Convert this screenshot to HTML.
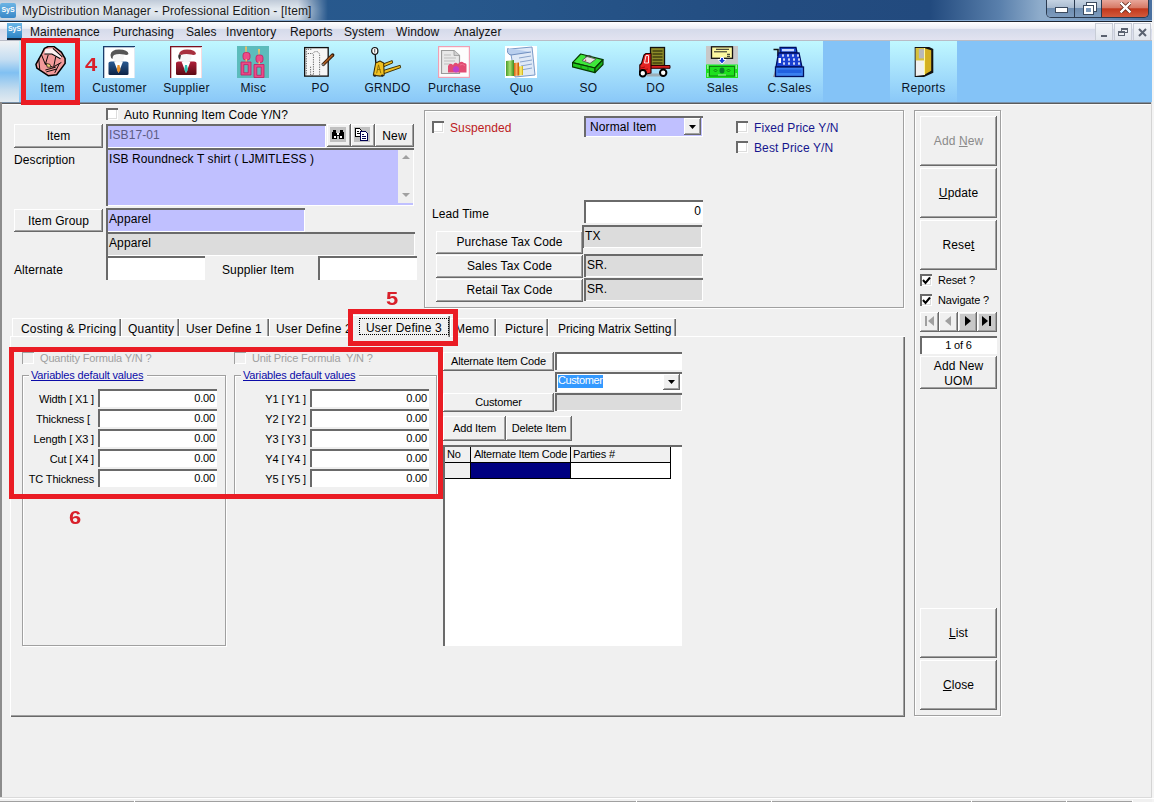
<!DOCTYPE html>
<html><head><meta charset="utf-8">
<style>
*{box-sizing:border-box;margin:0;padding:0}
html,body{width:1154px;height:802px;overflow:hidden;background:#f0f0f0;font-family:"Liberation Sans",sans-serif;font-size:12px;color:#000}
.a{position:absolute}
.t{position:absolute;white-space:nowrap;line-height:14px;font-size:12px;letter-spacing:0.1px}
.btn{position:absolute;padding-top:1px;letter-spacing:0.1px;background:#f0f0f0;box-shadow:inset -1px -1px #696969,inset 1px 1px #fff,inset -2px -2px #a0a0a0,inset 2px 2px #f0f0f0;text-align:center;white-space:nowrap;font-size:12px}
.sunk{position:absolute;box-shadow:inset 2px 2px #6a6a6a,inset -1px -1px #fff;white-space:nowrap;overflow:hidden}
.lav{background:#c0c0ff}
.gry{background:#dcdcdc}
.wht{background:#fff}
.chk{position:absolute;width:12px;height:12px;background:#fff;box-shadow:inset 2px 2px #6a6a6a,inset -1px -1px #fff,inset -2px -2px #dcdcdc}
.etch{position:absolute;border:1px solid #a0a0a0;box-shadow:inset 1px 1px #fff,1px 1px #fff}
.red{position:absolute;border:5px solid #ea1c24}
.rnum{position:absolute;color:#d8202a;font-weight:bold;font-size:18px;line-height:18px;transform:scaleX(1.22);transform-origin:0 0}
.tb{position:absolute;top:41px;height:61px;width:67px;background:linear-gradient(#c0f8ff,#a8e2fc 45%,#8ac8f8)}
.tbl{position:absolute;top:40px;left:0;width:67px;text-align:center;color:#0a1428;font-size:12px;line-height:14px;letter-spacing:0.3px}
.ic{position:absolute;top:5px;left:17px;width:32px;height:32px}
u{text-decoration:underline}
.s11{font-size:11px;letter-spacing:-0.15px}
.r{text-align:right}
.tab{background:#f0f0f0;box-shadow:inset 1px 1px #fff,inset -1px 0 #696969,inset -2px 0 #a0a0a0}
</style></head><body>

<!-- TITLE BAR -->
<div class="a" style="left:0;top:0;width:1154px;height:21px;background:linear-gradient(90deg,#2a5a90 0px,#27588c 450px,#234c80 780px,#224a7e 930px,#5a80ac 1000px,#8eaccb 1040px,#8eaccb 1050px,#4a70a0 1150px)"></div>
<div class="a" style="left:0;top:0;width:340px;height:20px;background:linear-gradient(#bfcad8,#e3e9f0 45%,#dde4ec 70%,#c9d3df);-webkit-mask-image:linear-gradient(90deg,#000 0,#000 298px,transparent 328px)"></div>
<div class="a" style="left:0;top:3px;width:16px;height:15px;background:linear-gradient(#6cb4e4,#3a88c8);border-radius:2px;color:#fff;font-size:7px;line-height:14px;text-align:center;font-weight:bold">SyS</div>
<div class="t" style="left:22px;top:4px;color:#1a1a1a;letter-spacing:0.1px">MyDistribution Manager - Professional Edition - [Item]</div>
<!-- window controls -->
<div class="a" style="left:1046px;top:0;width:103px;height:18px;border:1px solid #2a3a4f;border-top:none;border-radius:0 0 5px 5px;overflow:hidden">
  <div class="a" style="left:0;top:0;width:28px;height:17px;background:linear-gradient(#c5d3e3 0%,#a9bbd0 45%,#6e8db1 50%,#7d9bbd 100%);border-right:1px solid #2a3a4f"></div>
  <div class="a" style="left:28px;top:0;width:27px;height:17px;background:linear-gradient(#c5d3e3 0%,#a9bbd0 45%,#6e8db1 50%,#7d9bbd 100%);border-right:1px solid #2a3a4f"></div>
  <div class="a" style="left:55px;top:0;width:47px;height:17px;background:linear-gradient(#e8a79a 0%,#d77a66 45%,#c2381c 52%,#d35a3c 100%)"></div>
  <div class="a" style="left:9px;top:8px;width:11px;height:4px;background:#fff;box-shadow:0 0 0 1px #3b4a5e"></div>
  <div class="a" style="left:40px;top:3px;width:9px;height:8px;border:2px solid #fff;box-shadow:0 0 0 1px #3b4a5e"></div>
  <div class="a" style="left:37px;top:6px;width:9px;height:8px;border:2px solid #fff;background:#7d9bbd;box-shadow:0 0 0 1px #3b4a5e"></div>
  <svg class="a" style="left:73px;top:2px" width="11" height="11" viewBox="0 0 12 12"><path d="M1.5 1.5 L10.5 10.5 M10.5 1.5 L1.5 10.5" stroke="#5a2010" stroke-width="4.2" stroke-linecap="square"/><path d="M1.5 1.5 L10.5 10.5 M10.5 1.5 L1.5 10.5" stroke="#fff" stroke-width="2.6" stroke-linecap="square"/></svg>
</div>
<div class="a" style="left:0;top:20px;width:1154px;height:1px;background:#86acd4"></div>
<div class="a" style="left:0;top:21px;width:1154px;height:1px;background:#1c2430"></div>

<!-- MENU BAR -->
<div class="a" style="left:0;top:22px;width:1152px;height:18px;background:linear-gradient(#ffffff 0%,#eceef6 36%,#d4daea 37%,#e2e3f0 100%)"></div>
<div class="a" style="left:7px;top:23px;width:15px;height:17px;background:linear-gradient(#6bb6e6,#2f86c6);border-bottom:2px solid #10243a;color:#fff;font-size:7px;line-height:12px;text-align:center;font-weight:bold">SyS</div>
<div class="t" style="left:30px;top:25px;color:#111">Maintenance</div>
<div class="t" style="left:113px;top:25px;color:#111">Purchasing</div>
<div class="t" style="left:186px;top:25px;color:#111">Sales</div>
<div class="t" style="left:226px;top:25px;color:#111">Inventory</div>
<div class="t" style="left:290px;top:25px;color:#111">Reports</div>
<div class="t" style="left:344px;top:25px;color:#111">System</div>
<div class="t" style="left:396px;top:25px;color:#111">Window</div>
<div class="t" style="left:454px;top:25px;color:#111">Analyzer</div>
<div class="a" style="left:1095px;top:23px;width:18px;height:18px;border:1px solid #c7ccd6;background:linear-gradient(#f3f5f9,#e1e6ee)"><div class="a" style="left:5px;top:11px;width:6px;height:2px;background:#5a6270"></div></div>
<div class="a" style="left:1114px;top:23px;width:18px;height:18px;border:1px solid #c7ccd6;background:linear-gradient(#f3f5f9,#e1e6ee)"><div class="a" style="left:6px;top:4px;width:7px;height:5px;border:1px solid #5a6270;border-top-width:2px"></div><div class="a" style="left:3px;top:7px;width:7px;height:5px;border:1px solid #5a6270;border-top-width:2px;background:#eceff4"></div></div>
<div class="a" style="left:1133px;top:23px;width:18px;height:18px;border:1px solid #c7ccd6;background:linear-gradient(#f3f5f9,#e1e6ee)"><svg class="a" style="left:4px;top:4px" width="9" height="9"><path d="M1 1 L8 8 M8 1 L1 8" stroke="#5a6270" stroke-width="2"/></svg></div>

<!-- TOOLBAR -->
<div class="a" style="left:0;top:40px;width:1152px;height:1px;background:#b9bcc6"></div>
<div class="a" style="left:0;top:41px;width:1152px;height:61px;background:#84c3f7"></div>
<div class="a" style="left:0;top:41px;width:19px;height:61px;background:linear-gradient(#f0f2f4,#c6def2 30%,#80c0f2 52%,#c4dcee 80%,#e2eaf0)"></div>
<!-- Item -->
<div class="tb" style="left:19px">
<svg class="ic" style="left:16px;top:5px" width="34" height="33" viewBox="0 0 34 33"><path d="M10 2 L14 0 L20 0 L28 6 L32 13 L32 18 L23 30 L14 31 L2 23 L1 19 L7 8 Z" fill="#f29a9a" stroke="#000" stroke-width="1.6" stroke-linejoin="round"/><path d="M11 3 L19 2 L29 10 L26 13 L18 8 L10 8 Z" fill="#fff" opacity="0.85"/><path d="M10 8 L18 8 L27 13 M19 2 L29 11" stroke="#000" stroke-width="1.1" fill="none"/><path d="M7 9 L11 19 L19 22 L28 17 M14 9 L11 19 M22 11 L20 21 M4 13 L5 24 M11 25 L22 22 M12 27 L23 24 M26 18 L21 28" stroke="#000" stroke-width="1" fill="none"/><path d="M12 18 L16 19 L17 22 L13 22 Z" fill="#f4d47a" stroke="#000" stroke-width="0.7"/></svg>
<div class="tbl">Item</div></div>
<!-- Customer -->
<div class="tb" style="left:86px">
<svg class="ic" width="32" height="32" viewBox="0 0 32 32"><rect x="0" y="0" width="32" height="32" fill="#fff"/><rect x="0" y="0" width="32" height="1.3" fill="#1a3d6c"/><rect x="0" y="0" width="1.3" height="32" fill="#1a3d6c"/><rect x="31" y="1" width="1" height="31" fill="#dfe9f3"/><defs><linearGradient id="gs1" x1="0" y1="0" x2="0" y2="1"><stop offset="0" stop-color="#2a5a92"/><stop offset="1" stop-color="#0c2244"/></linearGradient><linearGradient id="gs2" x1="0" y1="0" x2="0" y2="1"><stop offset="0" stop-color="#b0203a"/><stop offset="1" stop-color="#5a0a14"/></linearGradient></defs><path d="M5.5 28 L5.5 17 Q5.5 15.5 8 15.5 L23 15.5 Q25.5 15.5 25.5 17 L25.5 28 Q25.5 29 24 29 L7 29 Q5.5 29 5.5 28Z" fill="url(#gs1)"/><path d="M11 15.5 L15.5 27 L20 15.5Z" fill="#fff"/><path d="M14.5 19 L16.5 19 L17.5 24 L15.5 27 L13.8 24Z" fill="#e8902a"/><ellipse cx="15.5" cy="11" rx="5.5" ry="5.5" fill="#f6f6f6"/><path d="M7.5 9 Q8 3.5 16 3.5 Q25 3.5 25.5 8 Q24 9.5 21 8.5 Q15 7.5 11 9 Q9.5 10 9.5 13 Q7.5 12 7.5 9Z" fill="#555"/></svg>
<div class="tbl">Customer</div></div>
<!-- Supplier -->
<div class="tb" style="left:153px">
<svg class="ic" width="32" height="32" viewBox="0 0 32 32"><rect x="0" y="0" width="32" height="32" fill="#fff"/><rect x="0" y="0" width="32" height="1.3" fill="#7a1020"/><rect x="0" y="0" width="1.3" height="32" fill="#7a1020"/><rect x="31" y="1" width="1" height="31" fill="#f6dce0"/><path d="M6 28 L6 17 Q6 15.5 8.5 15.5 L24 15.5 Q26.5 15.5 26.5 17 L26.5 28 Q26.5 29 25 29 L7.5 29 Q6 29 6 28Z" fill="url(#gs2)"/><path d="M11.5 15.5 L16 27 L20.5 15.5Z" fill="#fff"/><path d="M15 19 L17 19 L18 24 L16 27 L14.3 24Z" fill="#30c0b0"/><ellipse cx="16" cy="11" rx="5.5" ry="5.5" fill="#f6f6f6"/><path d="M9 8 Q10 3.5 17 3.5 Q25.5 3.5 26 8 Q24 9.5 21 8.5 Q15 7.5 11 9 Z" fill="#a8303e"/><path d="M9 8 Q7 11 10 14 L11 9Z" fill="#333"/></svg>
<div class="tbl">Supplier</div></div>
<!-- Misc -->
<div class="tb" style="left:220px">
<svg class="ic" width="32" height="32" viewBox="0 0 32 32"><rect x="0" y="0" width="32" height="32" fill="#5cbcbc"/><g><path d="M8 0.5 L10 0.5 L9.5 7 L8.5 7Z" fill="#f2c060"/><rect x="6" y="6.5" width="7" height="7.5" rx="2.5" fill="#ec4a88" stroke="#c02060" stroke-width="0.8"/><path d="M8.5 13 L10 13 L10 17 L8.5 17Z" fill="#f2c060"/><path d="M4 16 L14 16 L14 29 L4 29 Z M6.8 18.6 L6.8 26.8 L11.2 26.8 L11.2 18.6 Z" fill="#ec4a88" fill-rule="evenodd" stroke="#c02060" stroke-width="0.8"/></g><g transform="translate(13 2.5)"><path d="M8 0.5 L10 0.5 L9.5 7 L8.5 7Z" fill="#f2c060"/><rect x="6" y="6.5" width="7" height="7.5" rx="2.5" fill="#ec4a88" stroke="#c02060" stroke-width="0.8"/><path d="M8.5 13 L10 13 L10 17 L8.5 17Z" fill="#f2c060"/><path d="M4 16 L14 16 L14 29 L4 29 Z M6.8 18.6 L6.8 26.8 L11.2 26.8 L11.2 18.6 Z" fill="#ec4a88" fill-rule="evenodd" stroke="#c02060" stroke-width="0.8"/></g></svg>
<div class="tbl">Misc</div></div>
<!-- PO -->
<div class="tb" style="left:287px">
<svg class="ic" width="34" height="32" viewBox="0 0 34 32"><rect x="0.7" y="0.7" width="25" height="30.3" fill="#f6f6f6" stroke="#111" stroke-width="1.4"/><path d="M2.5 2 L2.5 30 M4 2.5 L8 2.5 M4 7 L9 7 M10 8 L10 30 M9 7 Q11 4.5 14 5 Q16.6 6 16.6 9 L16.6 30 M7 21 L7 30 L10 30" fill="none" stroke="#333" stroke-width="0.8" stroke-dasharray="1.3 1.2"/><path d="M20.5 18.5 L30.5 8.5" stroke="#2a1606" stroke-width="3.6" stroke-linecap="round"/><path d="M20.5 18.5 L30.5 8.5" stroke="#a85a20" stroke-width="2"/><path d="M19.5 19.5 L21 18" stroke="#888" stroke-width="2"/></svg>
<div class="tbl">PO</div></div>
<!-- GRNDO -->
<div class="tb" style="left:354px">
<svg class="ic" width="34" height="32" viewBox="0 0 34 32"><path d="M4.5 8 L5.2 18" stroke="#111" stroke-width="1.4"/><ellipse cx="4" cy="4.3" rx="3.3" ry="3.7" fill="#fff" stroke="#111" stroke-width="1.3"/><path d="M4 2 L4 6" stroke="#111" stroke-width="0.8"/><path d="M13 18 L22.5 14.5 L23 17 L13.5 21 Z M13 25 L31 19.5 L31.5 22 L13.5 28.5 Z" fill="#f0c020" stroke="#3a2a00" stroke-width="1"/><path d="M2.5 30 L5 17 L9.5 15 L13.5 17 L14 30 L10 31 Z" fill="#f0c020" stroke="#3a2a00" stroke-width="1.1" stroke-linejoin="round"/><path d="M6 28 L8 19 L10.5 28 M7 24 L10 24" stroke="#8a6a00" stroke-width="1" fill="none"/><circle cx="4" cy="30.5" r="1.3" fill="#222"/><circle cx="12" cy="30.5" r="1.3" fill="#222"/></svg>
<div class="tbl">GRNDO</div></div>
<!-- Purchase -->
<div class="tb" style="left:421px">
<svg class="ic" width="32" height="32" viewBox="0 0 32 32"><rect x="0.6" y="0.6" width="30.8" height="30.8" fill="#fdfdfd" stroke="#f0a0b4" stroke-width="1.2"/><path d="M3.5 4.5 L16 4.5 L21.5 9.5 L21.5 27.5 L3.5 27.5 Z" fill="#e8e8e8" stroke="#9a9a9a" stroke-width="1.2"/><path d="M16 4.5 L16 9.5 L21.5 9.5" fill="#d0d0d0" stroke="#9a9a9a" stroke-width="0.8"/><path d="M6 9 L13 9 M6 12 L18 12 M6 15 L17 15 M6 18 L12 18" stroke="#bdbdbd" stroke-width="1"/><path d="M10 20 Q12 16 15 19 Q17 15 20 18 Q23 14 26 17 Q29 17 28.5 20 L28.5 26.5 L10 26.5 Z" fill="#e24c72"/><path d="M15 22 Q18 18 21 22 Q22 26 18 26.5 Q14 26 15 22Z" fill="#c040c8"/><path d="M22 19 Q25 17 27 20" stroke="#f07090" stroke-width="1" fill="none"/></svg>
<div class="tbl">Purchase</div></div>
<!-- Quo -->
<div class="tb" style="left:488px">
<svg class="ic" width="32" height="32" viewBox="0 0 32 32"><rect x="0" y="0" width="32" height="32" fill="#fff"/><path d="M5 3 L27 1 L30 29 L10 31 Z" fill="#dfe9f7" stroke="#7a9ac8" stroke-width="1"/><path d="M3 2 Q1 8 6 9 L26 6" fill="#b9cfee" stroke="#6f8fc0" stroke-width="1"/><path d="M14 12 L26 10 M15 16 L27 14 M16 20 L27 18 M16 24 L27 22" stroke="#8aa4cc" stroke-width="1"/><defs><linearGradient id="qg" x1="0" x2="1"><stop offset="0" stop-color="#4a9a2a"/><stop offset="0.5" stop-color="#a8e070"/><stop offset="1" stop-color="#3a8a20"/></linearGradient><linearGradient id="qo" x1="0" x2="1"><stop offset="0" stop-color="#d86010"/><stop offset="0.5" stop-color="#f8b060"/><stop offset="1" stop-color="#c85000"/></linearGradient><linearGradient id="qy" x1="0" x2="1"><stop offset="0" stop-color="#d8c020"/><stop offset="0.5" stop-color="#fff080"/><stop offset="1" stop-color="#c8a800"/></linearGradient></defs><path d="M1 15 L9 14 L9 30 L1 30Z" fill="url(#qg)"/><path d="M9 17 L14 16.5 L14 29.5 L9 30Z" fill="url(#qo)"/><path d="M14 20.5 L18 20 L18 29 L14 29.5Z" fill="url(#qy)"/></svg>
<div class="tbl">Quo</div></div>
<!-- SO -->
<div class="tb" style="left:555px">
<svg class="ic" width="32" height="32" viewBox="0 0 32 32"><path d="M0.5 16.6 L8.7 8 L31 13.7 L23 22 Z" fill="#3ee83a" stroke="#063a00" stroke-width="1.2" stroke-linejoin="round"/><path d="M0.5 16.6 L23 22 L23 26.6 L0.5 20.9 Z" fill="#22c820" stroke="#063a00" stroke-width="1.2" stroke-linejoin="round"/><path d="M23 22 L31 13.7 L31 18.5 L23 26.6 Z" fill="#18b018" stroke="#063a00" stroke-width="1.2" stroke-linejoin="round"/><path d="M10 14.5 L15 10.5 L24 13 L18 17.5 Z" fill="#e4e4e4" stroke="#555" stroke-width="0.9"/><path d="M13 11 L17 9.5 L20 10.5" stroke="#444" stroke-width="0.9" fill="none"/><circle cx="13.5" cy="14.3" r="0.8" fill="#d03030"/><path d="M9 18.5 L9 22.5 M16 20 L16 24.5" stroke="#0a6a0a" stroke-width="0.7"/></svg>
<div class="tbl">SO</div></div>
<!-- DO -->
<div class="tb" style="left:622px">
<svg class="ic" width="32" height="32" viewBox="0 0 32 32"><rect x="11.5" y="1.5" width="14" height="18" fill="#8c8a28" stroke="#111" stroke-width="1.3"/><path d="M13.5 5 L23.5 5 M13.5 8 L23.5 8 M13.5 11 L23.5 11 M13.5 14 L23.5 14 M13.5 17 L23.5 17" stroke="#1a1a00" stroke-width="1"/><rect x="8" y="27.5" width="14" height="3" fill="#9a9a9a" opacity="0.7"/><path d="M11.5 19.5 L31 19.5 L31 22.3 L11.5 22.3 Z" fill="#d42020" stroke="#300" stroke-width="1"/><path d="M0.8 28 L0.8 19 L2.5 17.5 L5 9 L7 7.5 L12 7.5 L12 27 L7 28 Z" fill="#e42222" stroke="#200" stroke-width="1.1" stroke-linejoin="round"/><path d="M5.5 17 L7 9.5 L9.5 9.5 L9.5 17 Z" fill="none" stroke="#fff" stroke-width="0.9"/><path d="M2 22 L6 21 M2 24 L9 23" stroke="#800" stroke-width="0.7"/><circle cx="3.8" cy="27.2" r="3.2" fill="#fff" stroke="#000" stroke-width="2"/><circle cx="24.2" cy="26.8" r="3.2" fill="#fff" stroke="#000" stroke-width="2"/></svg>
<div class="tbl">DO</div></div>
<!-- Sales -->
<div class="tb" style="left:689px">
<svg class="ic" width="32" height="32" viewBox="0 0 32 32"><rect x="0" y="0" width="32" height="18.5" fill="#c8c8c8"/><rect x="5.5" y="0.8" width="21" height="11.5" fill="#fbf7a0" stroke="#111" stroke-width="1.3"/><path d="M10 3.3 L23 3.3 M8 5.8 L21 5.8 M21 8.3 L24 8.3 M21 10.3 L24 10.3" stroke="#222" stroke-width="1"/><path d="M12 13.5 L14.5 13.5 L14.5 11.5 L17.5 11.5 L17.5 13.5 L20 13.5 L16 18 Z" fill="#1a3ad8" stroke="#fff" stroke-width="1"/><rect x="0" y="18.5" width="32" height="13.5" fill="#1ee01e"/><rect x="3.5" y="20.5" width="25" height="9.5" fill="none" stroke="#0a6a0a" stroke-width="0.8"/><path d="M1 20 L2.5 20 M1 22 L2.5 22 M29.5 20 L31 20 M29.5 22 L31 22 M1 28 L2.5 28 M1 30 L2.5 30 M29.5 28 L31 28 M29.5 30 L31 30" stroke="#fff" stroke-width="1.2"/><ellipse cx="16" cy="24.5" rx="2.5" ry="3" fill="#0a7a2a"/><path d="M8 24.5 L9.5 23 L11 24.5 L9.5 26Z M21 24.5 L22.5 23 L24 24.5 L22.5 26Z" fill="none" stroke="#0a5a0a" stroke-width="0.7"/><path d="M12 29 L20 29" stroke="#c8f8c8" stroke-width="0.8"/></svg>
<div class="tbl">Sales</div></div>
<!-- C.Sales -->
<div class="tb" style="left:756px">
<svg class="ic" width="32" height="32" viewBox="0 0 32 32"><path d="M0 31 L4 18 L4 31Z" fill="#9a9a9a"/><path d="M0.5 3.5 L5 3.5 L5 10" stroke="#111" stroke-width="1.6" fill="none"/><path d="M7 1.5 L23 1.5 L24 6.5 L7 6.5Z" fill="#2050d8" stroke="#001060" stroke-width="1.3"/><rect x="9" y="3" width="12" height="2.3" fill="#c8d8ff"/><path d="M5.5 7 L26 7 L29 21 L3 21 Z" fill="#1a40d0" stroke="#001060" stroke-width="1.3"/><path d="M9 9 L11 9 M10 9 L10 11 M14 9 L16 9 M15 9 L15 11 M19 9 L21 9 M20 9 L20 11 M24 9 L26 9 M25 9 L25 11 M10 13 L12 13 M11 13 L11 15 M15 13 L17 13 M16 13 L16 15 M20 13 L22 13 M21 13 L21 15 M25 13 L27 13 M26 13 L26 15 M10 17 L12 17 M11 17 L11 19 M15 17 L17 17 M16 17 L16 19 M20 17 L22 17 M21 17 L21 19 M25 17 L27 17 M26 17 L26 19" stroke="#fff" stroke-width="1.1"/><rect x="5.5" y="12" width="2.5" height="5" fill="#fff"/><rect x="2.5" y="21" width="28" height="9.5" fill="#3a80f0" stroke="#001060" stroke-width="1.3"/><rect x="4.5" y="23.5" width="24" height="3.5" fill="#2060e0"/></svg>
<div class="tbl">C.Sales</div></div>
<!-- Reports -->
<div class="tb" style="left:890px">
<svg class="ic" style="left:18px;top:5px" width="20" height="31" viewBox="0 0 20 31"><path d="M1 1 L15 1 L19 3 L19 26 L10 30 L1 30 Z" fill="#111"/><path d="M2 2 L10 2 L10 28 L2 29 Z" fill="#f0f0f0"/><path d="M2 2 L10 2 L10 14 L2 14 Z" fill="#d8c23a"/><path d="M5 3 L10 3 L10 12 L5 12Z" fill="#b8b8b8"/><path d="M10 2 L17 4 L17 24 L10 28 Z" fill="#d4b020"/><path d="M10 2 L11 2 L11 28 L10 28Z" fill="#fff8a0"/></svg>
<div class="tbl">Reports</div></div>

<div class="a" style="left:0;top:102px;width:1152px;height:1px;background:#7890a8"></div><div class="a" style="left:0;top:103px;width:1152px;height:1px;background:#5c5c5c"></div><div class="a" style="left:2px;top:104px;width:1149px;height:1px;background:#fbfbfb"></div>

<!-- MDI CHILD FRAME -->
<div class="a" style="left:0;top:102px;width:2px;height:696px;background:#8c8c8c"></div>
<div class="a" style="left:1151px;top:102px;width:1px;height:696px;background:#d4d4d4"></div>
<div class="a" style="left:1152px;top:0;width:2px;height:802px;background:#f4f4f4"></div>
<div class="a" style="left:0;top:797px;width:1152px;height:1px;background:#dadada"></div>
<div class="a" style="left:0;top:798px;width:1154px;height:1px;background:#fff"></div>
<div class="a" style="left:0;top:801px;width:1133px;height:1px;background:#a0a0a0"></div>

<!-- TOP LEFT -->
<div class="chk" style="left:106px;top:108px"></div>
<div class="t" style="left:124px;top:108px">Auto Running Item Code Y/N?</div>
<div class="btn" style="left:14px;top:124px;width:89px;height:24px;line-height:22px">Item</div>
<div class="sunk lav" style="left:106px;top:124px;width:220px;height:24px"><div class="t" style="left:3px;top:4px;color:#5c5c84">ISB17-01</div></div>
<div class="btn" style="left:327px;top:124px;width:24px;height:23px"><div class="a" style="left:3px;top:3px;width:16px;height:15px;background:#c0c0c0"></div>
<svg class="a" style="left:4px;top:5px" width="14" height="11" viewBox="0 0 14 11" shape-rendering="crispEdges"><path d="M2 1 H5 V4 H9 V1 H12 L13 5 V10 H8 V7 H6 V10 H1 V5 Z" fill="#000"/><rect x="3" y="7" width="2" height="2" fill="#fff"/><rect x="9" y="7" width="2" height="2" fill="#fff"/><rect x="6" y="4" width="2" height="2" fill="#fff"/></svg></div>
<div class="btn" style="left:351px;top:124px;width:24px;height:23px"><div class="a" style="left:3px;top:3px;width:16px;height:15px;background:#c0c0c0"></div>
<svg class="a" style="left:3px;top:3px" width="16" height="16" viewBox="0 0 16 16" shape-rendering="crispEdges"><path d="M1.5 1.5 H5.5 L7.5 3.5 V9.5 H1.5 Z" fill="#fff" stroke="#000" stroke-width="1.3"/><path d="M3 4.5 H5 M3 6.5 H6" stroke="#000" stroke-width="1"/><path d="M6.5 4.5 H11.5 L13.5 6.5 V13.5 H6.5 Z" fill="#fff" stroke="#000050" stroke-width="1.3"/><path d="M8 7.5 H10 M8 9.5 H12 M8 11.5 H12" stroke="#000050" stroke-width="1"/></svg></div>
<div class="btn" style="left:375px;top:124px;width:39px;height:23px;line-height:23px">New</div>

<div class="t" style="left:14px;top:153px">Description</div>
<div class="sunk lav" style="left:106px;top:148px;width:308px;height:58px"><div class="t" style="left:3px;top:4px;color:#000">ISB Roundneck T shirt ( LJMITLESS )</div>
<div class="a" style="left:292px;top:2px;width:15px;height:53px;background:#efefef"></div>
<svg class="a" style="left:296px;top:6px" width="8" height="5"><path d="M0 5 L4 1 L8 5Z" fill="#a0a0a0"/></svg>
<svg class="a" style="left:296px;top:45px" width="8" height="5"><path d="M0 0 L4 4 L8 0Z" fill="#a0a0a0"/></svg>
</div>

<div class="btn" style="left:14px;top:209px;width:89px;height:23px;line-height:22px">Item Group</div>
<div class="sunk lav" style="left:106px;top:208px;width:199px;height:24px"><div class="t" style="left:3px;top:4px">Apparel</div></div>
<div class="sunk gry" style="left:106px;top:232px;width:309px;height:24px"><div class="t" style="left:3px;top:4px">Apparel</div></div>
<div class="t" style="left:14px;top:263px">Alternate</div>
<div class="sunk wht" style="left:106px;top:256px;width:99px;height:24px"></div>
<div class="t" style="left:222px;top:263px">Supplier Item</div>
<div class="sunk wht" style="left:318px;top:256px;width:99px;height:24px"></div>

<!-- TOP RIGHT PANEL -->
<div class="etch" style="left:424px;top:110px;width:480px;height:198px"></div>
<div class="chk" style="left:432px;top:121px"></div>
<div class="t" style="left:450px;top:121px;color:#bc1a22">Suspended</div>
<div class="sunk lav" style="left:584px;top:116px;width:119px;height:21px"><div class="t" style="left:6px;top:4px">Normal Item</div>
<div class="btn" style="left:100px;top:2px;width:17px;height:17px"><svg class="a" style="left:5px;top:7px" width="7" height="4"><path d="M0 0 L7 0 L3.5 4Z" fill="#000"/></svg></div></div>
<div class="chk" style="left:736px;top:121px"></div>
<div class="t" style="left:754px;top:121px;color:#16168e">Fixed Price Y/N</div>
<div class="chk" style="left:736px;top:141px"></div>
<div class="t" style="left:754px;top:141px;color:#16168e">Best Price Y/N</div>
<div class="t" style="left:432px;top:207px">Lead Time</div>
<div class="sunk wht" style="left:584px;top:200px;width:119px;height:23px"><div class="t" style="right:2px;top:4px">0</div></div>
<div class="btn" style="left:436px;top:231px;width:147px;height:23px;line-height:21px">Purchase Tax Code</div>
<div class="sunk gry" style="left:582px;top:225px;width:120px;height:23px"><div class="t" style="left:3px;top:4px">TX</div></div>
<div class="btn" style="left:436px;top:255px;width:147px;height:23px;line-height:21px">Sales Tax Code</div>
<div class="sunk gry" style="left:584px;top:254px;width:119px;height:23px"><div class="t" style="left:3px;top:4px">SR.</div></div>
<div class="btn" style="left:436px;top:279px;width:147px;height:23px;line-height:21px">Retail Tax Code</div>
<div class="sunk gry" style="left:584px;top:278px;width:119px;height:23px"><div class="t" style="left:3px;top:4px">SR.</div></div>

<!-- RIGHT BUTTON PANEL -->
<div class="etch" style="left:914px;top:110px;width:87px;height:606px"></div>
<div class="btn" style="left:920px;top:116px;width:77px;height:50px;line-height:49px;color:#8a8a8a">Add <u>N</u>ew</div>
<div class="btn" style="left:920px;top:168px;width:77px;height:50px;line-height:49px"><u>U</u>pdate</div>
<div class="btn" style="left:920px;top:220px;width:77px;height:50px;line-height:49px">Rese<u>t</u></div>
<div class="chk" style="left:920px;top:274px"><svg class="a" style="left:2px;top:2px" width="9" height="9"><path d="M1 4 L3.5 7 L8 1.5" stroke="#000" stroke-width="2" fill="none"/></svg></div>
<div class="t s11" style="left:938px;top:273px">Reset ?</div>
<div class="chk" style="left:920px;top:294px"><svg class="a" style="left:2px;top:2px" width="9" height="9"><path d="M1 4 L3.5 7 L8 1.5" stroke="#000" stroke-width="2" fill="none"/></svg></div>
<div class="t s11" style="left:938px;top:293px">Navigate ?</div>
<div class="btn" style="left:920px;top:312px;width:19px;height:20px"><svg class="a" style="left:5px;top:4px" width="10" height="10"><rect x="0" y="0" width="2" height="10" fill="#a0a0a0"/><path d="M9 0 L3 5 L9 10Z" fill="#a0a0a0"/></svg></div>
<div class="btn" style="left:939px;top:312px;width:19px;height:20px"><svg class="a" style="left:6px;top:4px" width="10" height="10"><path d="M6 0 L0 5 L6 10Z" fill="#a0a0a0"/></svg></div>
<div class="btn" style="left:958px;top:312px;width:19px;height:20px;background:#c8c8c8"><svg class="a" style="left:7px;top:4px" width="10" height="10"><path d="M0 0 L6 5 L0 10Z" fill="#000"/></svg></div>
<div class="btn" style="left:977px;top:312px;width:20px;height:20px;background:#c8c8c8"><svg class="a" style="left:5px;top:4px" width="10" height="10"><path d="M0 0 L6 5 L0 10Z" fill="#000"/><rect x="7" y="0" width="2" height="10" fill="#000"/></svg></div>
<div class="sunk wht" style="left:920px;top:336px;width:77px;height:18px;text-align:center"><div class="t s11" style="left:0;width:77px;top:2px;text-align:center">1 of 6</div></div>
<div class="btn" style="left:920px;top:356px;width:77px;height:33px;line-height:15px;padding-top:3px">Add New<br>UOM</div>
<div class="btn" style="left:920px;top:608px;width:77px;height:50px;line-height:49px"><u>L</u>ist</div>
<div class="btn" style="left:920px;top:660px;width:77px;height:50px;line-height:49px"><u>C</u>lose</div>

<!-- TAB CONTROL -->
<div class="a" style="left:10px;top:336px;width:895px;height:381px;background:#f0f0f0;box-shadow:inset 1px 1px #fff,inset -1px -1px #696969,inset -2px -2px #a0a0a0"></div>
<!-- tabs -->
<div class="a tab" style="left:12px;top:318px;width:109px;height:18px"></div>
<div class="a tab" style="left:121px;top:318px;width:58px;height:18px"></div>
<div class="a tab" style="left:179px;top:318px;width:90px;height:18px"></div>
<div class="a tab" style="left:269px;top:318px;width:90px;height:18px"></div>
<div class="a tab" style="left:450px;top:318px;width:46px;height:18px"></div>
<div class="a tab" style="left:496px;top:318px;width:52px;height:18px"></div>
<div class="a tab" style="left:548px;top:318px;width:128px;height:18px"></div>
<div class="a tab" style="left:352px;top:315px;width:98px;height:22px;background:#f0f0f0;box-shadow:inset 1px 1px #fff,inset -1px 0 #696969,inset -2px 0 #a0a0a0"></div>
<div class="a" style="left:359px;top:318px;width:90px;height:17px;border:1px dotted #000"></div>
<div class="t" style="left:21px;top:322px;letter-spacing:0.2px">Costing &amp; Pricing</div>
<div class="t" style="left:128px;top:322px;letter-spacing:0.2px">Quantity</div>
<div class="t" style="left:186px;top:322px;letter-spacing:0.2px">User Define 1</div>
<div class="t" style="left:276px;top:322px;letter-spacing:0.2px">User Define 2</div>
<div class="t" style="left:366px;top:321px;letter-spacing:0.2px">User Define 3</div>
<div class="t" style="left:455px;top:322px;letter-spacing:0.2px">Memo</div>
<div class="t" style="left:505px;top:322px;letter-spacing:0.2px">Picture</div>
<div class="t" style="left:558px;top:322px;letter-spacing:0">Pricing Matrix Setting</div>

<!-- USER DEFINE 3 PAGE -->
<div class="chk" style="left:22px;top:352px;box-shadow:inset 1px 1px #a0a0a0,inset -1px -1px #fff;background:#f0f0f0"></div>
<div class="t s11" style="left:40px;top:351px;color:#a0a0a0">Quantity Formula Y/N ?</div>
<div class="etch" style="left:22px;top:375px;width:204px;height:271px"></div>
<div class="a" style="left:29px;top:369px;width:118px;height:14px;background:#f0f0f0"></div>
<div class="t s11" style="left:31px;top:368px;color:#0c0ca8;text-decoration:underline">Variables default values</div>
<div class="t s11 r" style="left:0;width:94px;top:392px">Width [ X1 ]</div>
<div class="t s11 r" style="left:0;width:90px;top:412px">Thickness [</div>
<div class="t s11 r" style="left:0;width:94px;top:432px">Length [ X3 ]</div>
<div class="t s11 r" style="left:0;width:94px;top:452px">Cut [ X4 ]</div>
<div class="t s11 r" style="left:0;width:94px;top:472px">TC Thickness</div>
<div class="sunk wht" style="left:98px;top:389px;width:119px;height:18px"><div class="t s11" style="right:2px;top:2px">0.00</div></div>
<div class="sunk wht" style="left:98px;top:409px;width:119px;height:18px"><div class="t s11" style="right:2px;top:2px">0.00</div></div>
<div class="sunk wht" style="left:98px;top:429px;width:119px;height:18px"><div class="t s11" style="right:2px;top:2px">0.00</div></div>
<div class="sunk wht" style="left:98px;top:449px;width:119px;height:18px"><div class="t s11" style="right:2px;top:2px">0.00</div></div>
<div class="sunk wht" style="left:98px;top:469px;width:119px;height:18px"><div class="t s11" style="right:2px;top:2px">0.00</div></div>

<div class="chk" style="left:234px;top:352px;box-shadow:inset 1px 1px #a0a0a0,inset -1px -1px #fff;background:#f0f0f0"></div>
<div class="t s11" style="left:252px;top:351px;color:#a0a0a0">Unit Price Formula&nbsp; Y/N ?</div>
<div class="etch" style="left:234px;top:375px;width:203px;height:121px"></div>
<div class="a" style="left:241px;top:369px;width:118px;height:14px;background:#f0f0f0"></div>
<div class="t s11" style="left:243px;top:368px;color:#0c0ca8;text-decoration:underline">Variables default values</div>
<div class="t s11 r" style="left:200px;width:106px;top:392px">Y1 [ Y1 ]</div>
<div class="t s11 r" style="left:200px;width:106px;top:412px">Y2 [ Y2 ]</div>
<div class="t s11 r" style="left:200px;width:106px;top:432px">Y3 [ Y3 ]</div>
<div class="t s11 r" style="left:200px;width:106px;top:452px">Y4 [ Y4 ]</div>
<div class="t s11 r" style="left:200px;width:106px;top:472px">Y5 [ Y5 ]</div>
<div class="sunk wht" style="left:310px;top:389px;width:119px;height:18px"><div class="t s11" style="right:2px;top:2px">0.00</div></div>
<div class="sunk wht" style="left:310px;top:409px;width:119px;height:18px"><div class="t s11" style="right:2px;top:2px">0.00</div></div>
<div class="sunk wht" style="left:310px;top:429px;width:119px;height:18px"><div class="t s11" style="right:2px;top:2px">0.00</div></div>
<div class="sunk wht" style="left:310px;top:449px;width:119px;height:18px"><div class="t s11" style="right:2px;top:2px">0.00</div></div>
<div class="sunk wht" style="left:310px;top:469px;width:119px;height:18px"><div class="t s11" style="right:2px;top:2px">0.00</div></div>

<!-- alternate item code section -->
<div class="btn s11" style="left:443px;top:352px;width:111px;height:19px;line-height:17px">Alternate Item Code</div>
<div class="sunk wht" style="left:555px;top:352px;width:127px;height:18px"></div>
<div class="sunk wht" style="left:555px;top:372px;width:127px;height:20px"><div class="a" style="left:3px;top:3px;width:45px;height:13px;background:#3399ff"></div><div class="t s11" style="left:3px;top:1px;color:#fff;letter-spacing:-0.4px">Customer</div>
<div class="btn" style="left:108px;top:2px;width:17px;height:16px"><svg class="a" style="left:5px;top:6px" width="7" height="4"><path d="M0 0 L7 0 L3.5 4Z" fill="#000"/></svg></div></div>
<div class="btn s11" style="left:443px;top:393px;width:111px;height:19px;line-height:17px">Customer</div>
<div class="sunk gry" style="left:555px;top:393px;width:127px;height:18px"></div>
<div class="btn s11" style="left:443px;top:416px;width:63px;height:25px;line-height:23px">Add Item</div>
<div class="btn s11" style="left:506px;top:416px;width:66px;height:25px;line-height:23px">Delete Item</div>
<div class="sunk wht" style="left:443px;top:445px;width:239px;height:201px">
 <div class="a" style="left:2px;top:2px;width:226px;height:32px;border:1px solid #000;border-left:none;background:#fff"></div>
 <div class="a" style="left:2px;top:2px;width:226px;height:16px;background:#f0f0f0;border-bottom:1px solid #000;border-right:1px solid #000"></div>
 <div class="a" style="left:2px;top:18px;width:26px;height:15px;background:#f0f0f0"></div>
 <div class="a" style="left:28px;top:18px;width:100px;height:15px;background:#000080"></div>
 <div class="a" style="left:27px;top:2px;width:1px;height:32px;background:#000"></div>
 <div class="a" style="left:127px;top:2px;width:1px;height:32px;background:#000"></div>
 <div class="t s11" style="left:4px;top:2px">No</div>
 <div class="t s11" style="left:31px;top:2px;letter-spacing:-0.25px">Alternate Item Code</div>
 <div class="t s11" style="left:130px;top:2px">Parties #</div>
</div>

<!-- RED ANNOTATIONS -->
<div class="red" style="left:21px;top:38px;width:59px;height:67px"></div>
<div class="rnum" style="left:85px;top:56px">4</div>
<div class="red" style="left:348px;top:309px;width:110px;height:37px"></div>
<div class="rnum" style="left:386px;top:290px">5</div>
<div class="red" style="left:9px;top:347px;width:434px;height:152px"></div>
<div class="rnum" style="left:69px;top:509px">6</div>
<!-- status bar separators -->
<div class="a" style="left:134px;top:800px;width:1px;height:2px;background:#fff"></div>
<div class="a" style="left:636px;top:800px;width:1px;height:2px;background:#fff"></div>
<div class="a" style="left:771px;top:800px;width:1px;height:2px;background:#fff"></div>
<div class="a" style="left:971px;top:800px;width:1px;height:2px;background:#fff"></div>
<div class="a" style="left:1066px;top:800px;width:1px;height:2px;background:#fff"></div>
<div class="a" style="left:1132px;top:800px;width:1px;height:2px;background:#fff"></div>

</body></html>
